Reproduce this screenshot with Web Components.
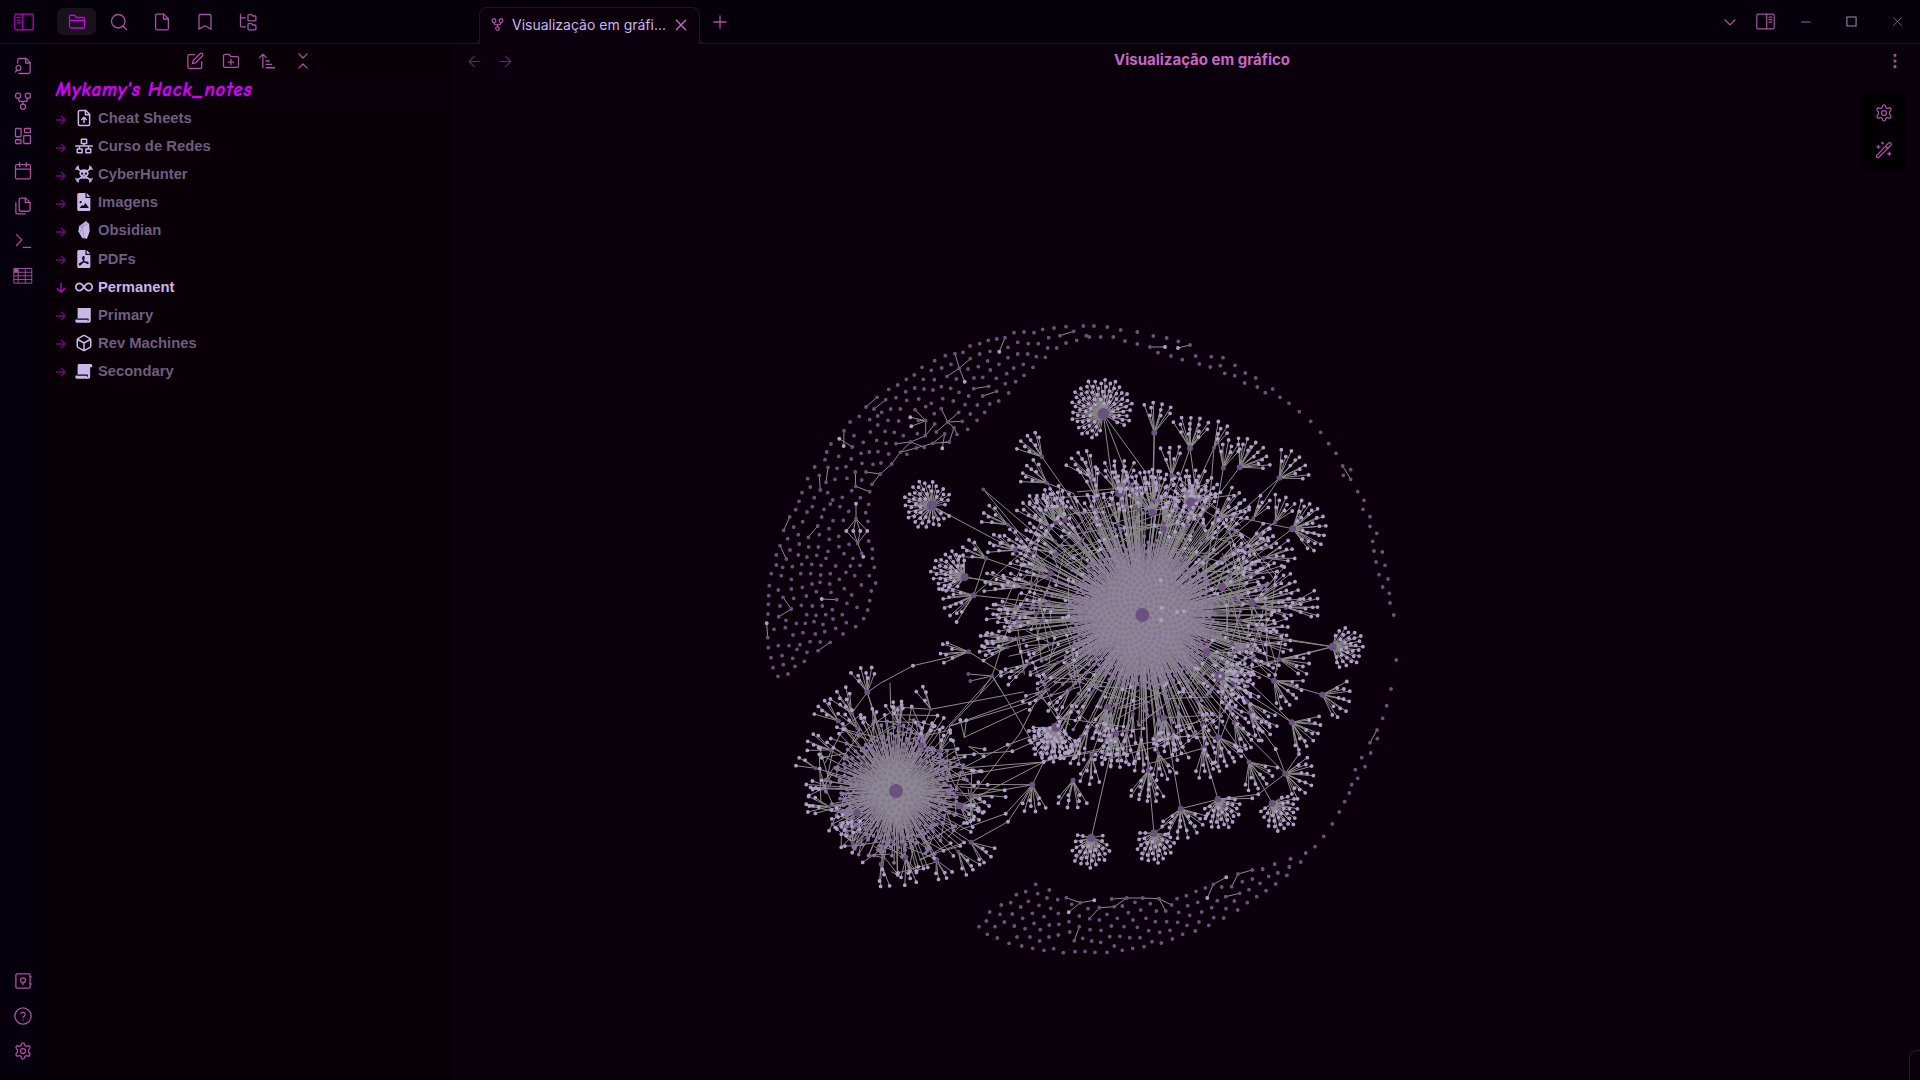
<!DOCTYPE html>
<html lang="pt-BR">
<head>
<meta charset="utf-8">
<title>Visualização em gráfico</title>
<style>
html,body{margin:0;height:100%;background:#0a000c;overflow:hidden}
body{font-family:Inter,"Liberation Sans",sans-serif;font-size:15px}
</style>
</head>
<body>
<vault-app></vault-app>
<script>
const ICONS = {
  panelLeft:'<rect x="1" y="2.6" width="22" height="18.8" rx="2"/><path d="M10.5 3v18M4 6.5h3.5M4 9.7h3.5M4 12.9h3.5"/>',
  panelRight:'<rect x="1" y="2.6" width="22" height="18.8" rx="2"/><path d="M13.5 3v18M16.5 6.5H20M16.5 9.7H20M16.5 12.9H20"/>',
  folder:'<path d="M4 20h16a2 2 0 0 0 2-2V8a2 2 0 0 0-2-2h-7.9a2 2 0 0 1-1.7-.9l-.8-1.2A2 2 0 0 0 7.9 3H4a2 2 0 0 0-2 2v13a2 2 0 0 0 2 2ZM2 10h20"/>',
  search:'<circle cx="11" cy="11" r="9"/><path d="m22 22-4.6-4.6"/>',
  file:'<path d="M14.5 1.5H5.5a2 2 0 0 0-2 2v17a2 2 0 0 0 2 2h13a2 2 0 0 0 2-2v-13Z"/><path d="M14 1.5v6.500h6.500"/>',
  bookmark:'<path d="m20 21.500-8-4.500-8 4.500V4a2 2 0 0 1 2-2h12a2 2 0 0 1 2 2Z"/>',
  tree:'<path d="M21.500 10.500a1 1 0 0 0 1-1V5a1 1 0 0 0-1-1H18.500l-1.600-1.800H13a1 1 0 0 0-1 1v6.300a1 1 0 0 0 1 1ZM21.500 22.500a1 1 0 0 0 1-1V17a1 1 0 0 0-1-1H18.500l-1.600-1.800H13a1 1 0 0 0-1 1v6.300a1 1 0 0 0 1 1ZM2 2v14.500a2 2 0 0 0 2 2h4.500M2 6.500h6.500"/>',
  fileSearch:'<path d="M5 8V4a2 2 0 0 1 2-2h9l5.500 5.500V20a2 2 0 0 1-2 2H6.500"/><path d="M15.500 2v6h6M4 17.500l-2 2.500"/><circle cx="6" cy="14.500" r="3.300"/>',
  graph:'<circle cx="5.500" cy="5" r="3.500"/><circle cx="18.500" cy="5" r="3.500"/><circle cx="12" cy="19.500" r="3.300"/><path d="M6 8.500c0 3 1.500 4 3 4h6c1.500 0 3-1 3-4M12 12.500v3.500"/>',
  layout:'<rect x="2" y="2" width="7.500" height="11" rx="1"/><rect x="14" y="2" width="8" height="5.500" rx="1"/><rect x="13" y="11.500" width="9" height="10.500" rx="1"/><rect x="2" y="17" width="7.500" height="5" rx="1"/>',
  calendar:'<rect x="2" y="3.500" width="20" height="19" rx="2"/><path d="M7.500 1v5M16.500 1v5M2 9.500h20"/>',
  copy:'<path d="M15.500 1.500H9a2 2 0 0 0-2 2V17a2 2 0 0 0 2 2h10.500a2 2 0 0 0 2-2V7.500Z"/><path d="M15 1.500v6h6.500M2.500 7.500v13a2 2 0 0 0 2 2h10.500"/>',
  terminal:'<path d="m3.500 18 7-7.500-7-7M12.500 20.500H22"/>',
  table:'<path stroke-width="1.200" d="M.3 2h23.400v19.500H.3ZM5.500 2v19.500M15 2v19.500M.3 7h23.400M.3 11.800h23.400M.3 16.700h23.400"/><path fill="currentColor" stroke="none" d="M.3 2h5.200V7H.3Z"/>',
  vault:'<rect x="2.500" y="2.500" width="19" height="19" rx="1.500"/><circle cx="12" cy="11" r="3.300"/><path d="M12 14.300V17M21.500 6.500H23M21.500 16H23"/>',
  help:'<circle cx="12" cy="12" r="10.800"/><path d="M9 9a3.100 3.100 0 0 1 6 1c0 2-3 2.500-3 4.300M12 17.300v.2"/>',
  gear:'<path d="M10 3.200a2 2 0 0 1 4 0c.2 2.300 2.400 3 4.200 2.200 2.400-1.300 4.300 2 2.400 3.500-1.900 1.300-1.900 4.800 0 6.200 1.900 1.500 0 4.800-2.400 3.500-1.800-.8-4-.1-4.200 2.200a2 2 0 0 1-4 0c-.2-2.300-2.400-3-4.200-2.200-2.400 1.300-4.300-2-2.400-3.500 1.900-1.400 1.900-4.900 0-6.200-1.900-1.500 0-4.800 2.400-3.500 1.800.8 4 .1 4.200-2.200Z"/><circle cx="12" cy="12" r="3.300"/>',
  edit:'<path d="M11.500 3.500H4.500a2 2 0 0 0-2 2v14.500a2 2 0 0 0 2 2H19a2 2 0 0 0 2-2v-7"/><path d="M18.800 2.300a2.100 2.100 0 0 1 3 3L12.500 14.600l-4 1 1-4Z"/>',
  folderPlus:'<path d="M4 20.500h16a2 2 0 0 0 2-2V8.300a2 2 0 0 0-2-2h-8L9.500 3.200H4a2 2 0 0 0-2 2v13.300a2 2 0 0 0 2 2ZM12 10v7M8.500 13.500h7"/>',
  sort:'<path d="m2 7.500 4.500-4.500L11 7.500M6.500 3v18M11 12h4M11 16.500h7M11 21h11"/>',
  collapse:'<path d="m6.500 21.500 5.500-5.500 5.500 5.500M6.500 2.500 12 8l5.500-5.500"/>',
  close:'<path d="m4 4 16 16M20 4 4 20"/>',
  cross:'<path d="m1.500 1.500 21 21M22.500 1.500l-21 21"/>',
  plus:'<path d="M12 1.500v21M1.500 12h21"/>',
  down:'<path d="m3.500 8.500 8.500 8.500 8.500-8.500"/>',
  back:'<path d="M22 12H2M12 2 2 12l10 10"/>',
  fwd:'<path d="M2 12h20M12 2l10 10-10 10"/>',
  minus:'<path d="M2 12h20" stroke-width="3.500"/>',
  square:'<rect x="2" y="2" width="20" height="20"/>',
  dots:'<g fill="currentColor"><circle cx="12" cy="3.500" r="1.500"/><circle cx="12" cy="12" r="1.500"/><circle cx="12" cy="20.500" r="1.500"/></g>',
  wand:'<path d="m2.300 19.200 16-16.500c1.800-1.500 4.500 1.200 3 3L5 21.700c-1.800 1.500-4.300-.9-2.700-2.500ZM14 7l3 3M4.500 5.800v4M2.500 7.800h4M10 1.500v2.500M8.800 2.700h2.500M19 15v4M17 17h4"/>',
  arrow:'<path d="M1 12h21M13 3l9 9-9 9"/>',
  arrowDown:'<path d="M12 1v21M3 13l9 9 9-9"/>',
  sheet:'<path d="M14.500 2H6.500a2 2 0 0 0-2 2v16a2 2 0 0 0 2 2h11a2 2 0 0 0 2-2V7Z"/><path d="M14 2v5.500h5.500M12 18v-6M9 14l3-3 3 3"/>',
  net:'<path d="M8.500 3h7v5.500h-7ZM3 16h6.500v5H3ZM14.500 16H21v5h-6.500ZM1 12h22M12 8.500V12M6 12v4M18 12v4"/>',
  skull:'<g fill="currentColor" stroke="none"><path d="M12 5.500c4 0 6.200 2.500 6.200 5.500 0 2-1 3.200-2.400 4v3.500H8.200V15c-1.400-.8-2.400-2-2.400-4 0-3 2.200-5.500 6.200-5.500Z"/></g><path d="m2.500 3.500 5 4.500M21.500 3.500l-5 4.500M2.500 21l5.500-4.500M21.500 21 16 16.500M1 5.500 4.500 5 4 1.500M23 5.500 19.500 5l.5-3.500M1 18.500l3.500.5L4 22.500M23 18.500l-3.500.5.500 3.500"/><g fill="#0a0006" stroke="none"><circle cx="9.500" cy="11.500" r="1.500"/><circle cx="14.500" cy="11.500" r="1.500"/><path d="m12 13-1 2h2ZM10 17h1v2h-1ZM13 17h1v2h-1Z"/></g>',
  image:'<path fill="currentColor" stroke="none" d="M5 0h9v6.500h6.500V22a2 2 0 0 1-2 2H5a2 2 0 0 1-2-2V2a2 2 0 0 1 2-2ZM15.500 0l5 5h-5Z"/><g fill="#0a0006" stroke="none"><circle cx="7.500" cy="12" r="1.500"/><path d="m6 20 3.500-4 1.500 1.300 3-4 4.500 6.700Z"/></g>',
  stone:'<path fill="currentColor" stroke="none" d="M14.500 0 19 4l.5 10-3.500 9.500-6.500-1L4.500 14 5.500 7Z"/><path stroke="#8f80a4" stroke-width=".8" d="M14.500 0 10 7l2 16M5.500 7 10 7l-3.500 9M10 7l8-3.500"/>',
  pdf:'<path fill="currentColor" stroke="none" d="M5 0h9v6.500h6.500V22a2 2 0 0 1-2 2H5a2 2 0 0 1-2-2V2a2 2 0 0 1 2-2ZM15.500 0l5 5h-5Z"/><path stroke="#0a0006" stroke-width="1.500" d="M11 9c2-1 1 4 0 6s-4 6-5 4.500 4-3.500 6-3.500 6 0 5.500 1.500-6-2-7-5S10 9.500 11 9Z"/>',
  infinity:'<path stroke-width="2.300" d="M12 12c-2-3-3.500-4.900-6-4.900a4.900 4.900 0 0 0 0 9.800c2.500 0 4-1.900 6-4.900s3.500-4.900 6-4.900a4.900 4.900 0 0 1 0 9.800c-2.500 0-4-1.900-6-4.900Z"/>',
  scroll:'<path fill="currentColor" stroke="none" d="M3.500 2.500H21V20a2.300 2.300 0 0 1-2 2.300H3.500A2.500 2.500 0 0 1 1.200 18h2.300Z"/><path stroke="#0a0006" stroke-width="1.400" d="M4 17.500h13.500V19"/>',
  scroll2:'<path fill="currentColor" stroke="none" d="M5 2.500h16a2 2 0 0 1 2 2V7h-2.800v13a2.300 2.300 0 0 1-2 2.300H3.500A2.500 2.500 0 0 1 1.200 18h2.300V4.500A2 2 0 0 1 5 2.500Z"/><path stroke="#0a0006" stroke-width="1.400" d="M4 17.500h12.500V19"/>',
  box:'<path d="M21 16V8a2 2 0 0 0-1-1.730l-7-4a2 2 0 0 0-2 0l-7 4A2 2 0 0 0 3 8v8a2 2 0 0 0 1 1.730l7 4a2 2 0 0 0 2 0l7-4A2 2 0 0 0 21 16ZM3.300 7l8.700 5 8.700-5M12 22V12"/>'
};
function define(name, markup, setup){
  const t=document.createElement('template');
  customElements.define(name, class extends HTMLElement{
    connectedCallback(){
      if(this.shadowRoot) return;
      const root=this.attachShadow({mode:'open'});
      t.innerHTML=typeof markup==='function'?markup(this):markup;
      root.append(t.content.cloneNode(true));
      if(setup) setup(root,this);
    }
  });
}
define('ui-icon', el=>{
  const s=el.getAttribute('size')||18, w=el.getAttribute('weight')||1.7;
  return `<style>:host{display:block;flex:none;width:${s}px;height:${s}px}svg{display:block;width:100%;height:100%;overflow:visible}</style>
  <svg viewBox="0 0 24 24" fill="none" stroke="currentColor" stroke-width="${w}" stroke-linecap="round" stroke-linejoin="round">${ICONS[el.getAttribute('name')]}</svg>`;
});
define('side-ribbon', `<style>
:host{display:flex;flex-direction:column;justify-content:space-between;align-items:center;box-sizing:border-box;width:47px;background:#06000d;color:#a952a6;padding:13px .4px 20.4px 0}
div{display:flex;flex-direction:column;gap:17px}
</style>
<div>${['fileSearch','graph','layout','calendar','copy','terminal','table'].map(n=>`<ui-icon name="${n}"></ui-icon>`).join('')}</div>
<div>${['vault','help','gear'].map(n=>`<ui-icon name="${n}"></ui-icon>`).join('')}</div>`);
define('folder-row', el=>`<style>
:host{display:flex;align-items:center;height:28.1px;color:#6f5d80;font:bold 14.8px/20px "Liberation Sans",sans-serif}
:host([open]){color:#cbb6ea}
.a{margin-right:9px;color:#730085;padding-top:3px}
:host([open]) .a{color:#b800d6}
.i{margin-right:5px;color:#cbb6ea}
</style><ui-icon class="a" size="10" weight="3.200" name="${el.hasAttribute('open')?'arrowDown':'arrow'}"></ui-icon>
<ui-icon class="i" size="18" weight="2" name="${el.getAttribute('icon')}"></ui-icon><slot></slot>`);
define('file-sidebar', `<style>
:host{display:flex;flex-direction:column;width:401px;background:#090007;border:solid #000;border-width:0 2px 0 1px;box-sizing:content-box}
.tools{display:flex;justify-content:center;gap:18px;color:#a952a6;height:34px;align-items:center;box-sizing:border-box}
.name{height:26px;background:#08000a;display:flex;align-items:center;padding-left:8px;color:#d400f5;font:italic 700 19px/26px "Z003","URW Chancery L","Comic Neue",Lato,cursive;white-space:pre}
.name span{letter-spacing:.76px;position:relative;top:-1px;-webkit-text-stroke:.4px #d400f5}
.list{padding-left:8px}
</style>
<div class="tools"><ui-icon name="edit"></ui-icon><ui-icon name="folderPlus"></ui-icon><ui-icon name="sort"></ui-icon><ui-icon name="collapse"></ui-icon></div>
<div class="name"><span>Mykamy's Hack_notes</span></div>
<div class="list">
<folder-row icon="sheet">Cheat Sheets</folder-row><folder-row icon="net">Curso de Redes</folder-row><folder-row icon="skull">CyberHunter</folder-row><folder-row icon="image">Imagens</folder-row><folder-row icon="stone">Obsidian</folder-row><folder-row icon="pdf">PDFs</folder-row><folder-row icon="infinity" open>Permanent</folder-row><folder-row icon="scroll">Primary</folder-row><folder-row icon="box">Rev Machines</folder-row><folder-row icon="scroll2">Secondary</folder-row>
</div>`);
define('top-bar', `<style>
:host{display:flex;height:44px;box-sizing:border-box;background:#06000a;border-bottom:1px solid #1b171b;color:#a952a6}
.left{width:450px;box-sizing:border-box;border-right:1px solid #000;display:flex;align-items:center;padding:0 0 0 14px}
.sel{width:39px;height:27px;border-radius:6px;background:#19111b;color:#c900e8;display:flex;align-items:center;justify-content:center;margin-left:23px;margin-right:14px}
.left ui-icon + ui-icon{margin-left:24.9px}
.tabs{display:flex;flex:1;padding-left:29px;align-items:flex-end}
.tab{box-sizing:border-box;width:221px;height:37px;margin-bottom:-1px;border:1px solid #1b171b;border-bottom:0;border-radius:8px 8px 0 0;background:#0a000c;display:flex;align-items:center;padding:0 11px 3px 11px;color:#cbb6ea;position:relative}
.tab:before,.tab:after{content:"";position:absolute;bottom:0;width:6px;height:6px;border-bottom:1px solid #1b171b;background:#06000a}
.tab:before{left:-7px;border-right:1px solid #1b171b;border-bottom-right-radius:6px}
.tab:after{right:-7px;border-left:1px solid #1b171b;border-bottom-left-radius:6px}
.tab span{flex:1;margin-left:8px;font-size:14px;white-space:nowrap}
.tab ui-icon{color:#b355b0}.tab .x{color:#c867c2}
.plus{margin:0 0 14px 13px}
.win{display:flex;align-items:center;padding-right:18px}
</style>
<div class="left"><ui-icon style="color:#b400cf" size="20" weight="1.500" name="panelLeft"></ui-icon><div class="sel"><ui-icon name="folder"></ui-icon></div><ui-icon name="search"></ui-icon><ui-icon name="file"></ui-icon><ui-icon name="bookmark"></ui-icon><ui-icon name="tree"></ui-icon></div>
<div class="tabs"><div class="tab"><ui-icon name="graph" size="13" weight="2.200"></ui-icon><span>Visualização em gráfi...</span><ui-icon class="x" name="close" size="14" weight="2.400"></ui-icon></div><ui-icon class="plus" name="plus" size="14" weight="2.200"></ui-icon></div>
<div class="win"><ui-icon name="down" size="14" weight="2.200"></ui-icon><ui-icon name="panelRight" size="19" weight="1.500" style="margin-left:19px"></ui-icon><ui-icon name="minus" size="10" style="margin-left:25.500px;color:#5d4b6b"></ui-icon><ui-icon name="square" size="11" weight="2.300" style="margin-left:35.500px;color:#9c88b4"></ui-icon><ui-icon name="cross" size="9" weight="2.500" style="margin-left:36px;color:#6f5f7c"></ui-icon></div>`);
define('graph-controls', `<style>:host{display:flex;flex-direction:column;align-items:center;gap:19px;width:46px;height:79px;box-sizing:border-box;padding-top:12px;padding-right:1px;border-radius:8px;background:#030004;color:#a952a6}</style><ui-icon name="gear"></ui-icon><ui-icon name="wand"></ui-icon>`);

/* Unlinked notes: coordinates are in thirds of a pixel from each group's origin. */
const LOOSE = [
[750,310,`1000,48 948,50 912,54 878,58 852,68 822,66 792,68 971,64 930,77 1009,77 896,83 980,91 948,99 920,114 893,114 865,101 835,101 803,97 765,83 740,87 715,91 689,101 660,108 639,127 615,131 586,137 554,152 516,172 774,112 720,124 689,132 661,146 803,132 833,132 859,140 886,142 774,143 820,163 849,172 747,163 713,153 685,170 654,177 628,175 603,163 575,174 544,181 493,195 469,208 443,225 416,238 520,208 553,209 591,199 619,207 672,204 698,202 721,180 739,205 770,191 791,174 822,196 797,215 766,221 776,249 740,244 716,229 671,236 698,258 746,273 719,282 704,307 682,285 656,258 627,247 602,235 574,230 610,273 645,284 661,312 681,331 653,358 637,334 626,307 593,336 612,353 621,373 574,296 578,266 544,280 549,240 522,237 494,234 467,245 506,267 470,271 438,263 407,269 381,262 348,291 372,297 395,307 422,297 451,297 495,299 527,290 553,311 554,342 527,332 505,331 446,333 414,331 383,318 359,329 328,319 300,336 282,362 307,411 312,377 340,397 361,366 383,345 405,364 433,367 460,377 502,371 526,377 559,366 584,371 598,396 548,400 523,412 499,414 482,396 438,401 408,400 380,391 358,426 384,425 416,432 451,427 471,433 425,462 393,459 369,463 336,460 333,430 304,447 266,439 243,402 230,426 225,449 194,471 234,472 261,475 288,470 316,486 348,486 391,492 366,523 359,545 317,529 335,510 291,505 255,508 228,517 208,496 173,506 181,531 211,540 156,548 147,574 193,563 233,548 248,570 277,562 305,542 331,563 356,583 347,608 318,626 296,604 270,590 241,582 222,598 187,590 171,606 137,599 119,621 101,661 131,651 158,635 215,621 249,632 280,631 203,648 237,656 175,682 145,674 113,686 90,707 120,720 148,702 176,711 205,711 208,674 238,688 266,679 297,703 267,710 234,724 282,731 309,745 354,634 323,700 356,693 367,717 367,745 335,730 330,766 301,768 257,768 228,745 200,736 171,741 145,735 109,747 79,735 79,765 64,791 98,772 127,770 155,763 185,763 213,766 241,791 212,795 182,791 152,791 124,808 94,797 58,827 85,840 56,857 99,862 124,837 157,832 186,822 210,817 239,822 268,808 288,787 314,797 283,836 334,825 358,797 373,772 377,819 364,843 359,872 353,900 341,926 317,950 321,892 291,880 305,855 260,869 243,847 199,845 169,858 131,865 90,888 55,883 54,912 53,983 72,958 86,920 124,897 154,886 187,888 217,888 247,899 227,914 198,916 170,914 139,940 108,931 106,953 129,975 159,968 166,940 192,935 219,943 249,927 277,914 289,938 279,972 257,955 224,965 196,972 241,997 211,996 204,1022 180,995 150,1004 117,1007 85,1007 55,1013 63,1043 96,1037 128,1045 100,1064 69,1073 84,1099 114,1092 135,1069 163,1054 171,1027 141,1018 700,538 726,1098 655,1092 661,1113`],
[1050,350,`324,8 363,18 397,29 437,18 484,20 519,23 448,42 481,51 511,47 555,46 524,70 554,77 586,69 617,84 584,99 622,111 646,128 668,117 690,142 717,160 748,185 782,214 812,247 836,281 858,310 878,348 902,359 880,376 902,388 923,425 942,451 939,478 960,500 960,529 980,550 968,574 972,603 997,606 978,636 1005,646 987,674 1014,687 998,711 1018,730 1020,759 1031,795 132,-72 172,-69 212,-60 262,-54 310,-42 350,-36 300,-9 225,-27 190,-39 152,-39 118,-39 262,-18 385,-26 420,-15`],
[1050,600,`1039,180 1023,267 1010,317 998,355 981,390 982,416 960,428 962,459 935,473 945,500 916,509 923,535 905,554 898,579 884,605 868,636 847,672 821,709 795,740 767,759 752,786 722,776 718,800 711,826 684,819 674,793 656,829 638,807 607,810 564,822`],
[970,830,`197,163 167,185 139,194 203,191 238,180 231,204 263,209 175,214 122,218 94,225 59,246 152,231 207,226 242,235 265,250 305,223 187,250 222,260 127,252 90,253 158,265 192,280 238,285 267,283 297,275 328,258 354,236 49,273 27,290 52,313 82,324 75,290 103,276 133,288 165,296 211,299 141,321 180,321 117,340 155,348 188,355 209,333 237,321 265,315 299,306 222,361 251,356 280,368 315,365 345,364 375,367 411,367 433,348 457,361 488,355 522,350 546,335 574,339 607,327 338,325 365,333 392,337 419,320 450,319 479,323 510,323 360,299 393,301 424,288 462,290 502,292 536,302 569,307 600,301 638,313 676,303 651,286 623,277 590,275 556,275 528,265 489,270 442,265 411,253 388,270 475,248 512,240 559,243 541,221 495,217 457,228 626,247 659,256 653,227 621,206 649,197 678,184 706,174 683,217 695,246 687,276 716,286 731,263 761,264 768,236 725,233 742,212 793,213 803,240 832,218 860,200 888,182 917,162 950,136 992,96 1007,69 961,87 958,111 914,102 923,128 896,139 870,160 837,179 847,147 817,155 878,118 755,171 289,203 331,218 425,207 470,204 518,204 567,206 605,225 587,243 433,230 388,233 359,266 328,290 313,332 730,163 785,170 804,132 847,120 767,200 809,190`]];
const BRIGHT = [
[750,310,`748,125 644,215 481,322 484,349 268,386 281,408 577,415 318,581 289,663 310,663 331,663 352,663 340,740 215,867 50,940 489,1067 753,1086`],
[1050,350,`345,-9 384,-6 332,691 335,774 381,786 402,784 333,810 486,717 433,506 399,482 451,495 376,545`],
[970,830,`373,211 296,247 712,204 769,142`],
[780,640,`683,314 697,334 623,434 674,451 677,471 677,521 684,545 595,427 605,394 582,343 614,328 611,349 791,366 541,240 559,241 519,302`],
[1050,600,`625,583 607,595 747,462 677,447 489,226`]];
const LINKS = [
[750,310,`765,83 748,125|971,64 930,77|615,131 628,175 644,215|661,146 628,175 591,199|671,236 716,229|698,258 740,244|381,262 348,291|407,269 372,297|282,362 281,408|268,386 307,411|495,299 527,332 527,377 482,396 451,427 425,462 391,492 366,523|481,322 527,332 484,349|505,331 527,332|527,377 554,342|574,296 593,336 626,307|637,334 593,336 559,366|593,336 612,353 621,373|612,353 598,396 548,400 499,414 451,427|438,401 482,396 523,412|548,400 584,371 577,415|598,396 575,398|348,486 391,492|316,486 317,529 359,545|234,472 228,517|208,496 211,540|119,621 101,661|203,648 175,682|90,707 109,747|318,581 318,626 289,663 323,700 310,663 318,626 331,663 323,700 352,663 318,626|323,700 340,740|215,867 260,869|99,862 124,897 86,920|50,940 53,983|241,997 204,1022|655,1092 726,1098 661,1113|545,587 796,721 1160,900|644,801 1170,895|644,801 820,831 1175,910|671,856 708,745 1100,880|671,856 900,652|671,856 1170,910|656,1025 753,1086 820,1086|656,1025 585,1045 489,1067 400,1115|700,538 900,780|700,538 960,760|876,441 960,560 1100,850|891,519 970,550 1160,860|808,850 726,1098 690,1150|726,1098 752,1140`],
[1050,350,`878,348 902,388|306,-9 345,-9|384,-6 420,-15|160,192 190,420|160,192 240,400|160,192 284,363|313,248 306,470|313,248 309,480|420,295 340,520|420,295 440,440|492,293 420,450|492,293 478,470|520,354 470,650|569,352 510,430|688,384 610,505|688,384 535,520|728,536 503,490|728,536 520,690|676,516 520,640`],
[1050,600,`981,390 960,428|848,140 300,50|848,140 560,100|848,140 510,228|848,140 640,190|817,284 672,242|725,367 510,228|725,367 580,230|672,242 700,100|706,521 677,447 598,338|706,521 747,462 725,367|706,521 553,368|706,521 625,583 504,598|504,598 607,595|504,598 459,445|504,598 392,626|392,626 340,330|312,700 295,511 280,80|312,700 392,640|124,714 175,490 270,100|667,610 597,486 350,130|505,412 315,408|505,412 515,250|459,445 300,490|600,20 655,190|-20,482 459,400|0,480 205,435`],
[970,830,`289,203 331,218 373,211|331,218 296,247|425,207 470,204 518,204 567,206 605,225|567,206 587,243|470,204 433,230 388,233 359,266|328,290 313,332|712,204 730,163 769,142|785,170 804,132 847,120|767,200 809,190`],
[780,640,`332,200 452,208 730,156|510,258 662,97|490,275 640,107|637,107 742,280 791,366|510,258 737,176|553,292 740,205|548,384 683,314 750,290|532,346 697,334 820,280|480,334 510,258 900,140|548,384 791,366 900,330|535,408 791,366 757,434|573,467 757,434 535,433|540,497 791,366|573,467 720,280 760,200|540,570 677,521 757,434|573,607 684,545 757,434|540,440 674,451|530,458 677,471|567,320 614,328|567,320 611,349|548,384 605,394|553,292 541,240|553,292 559,241|532,346 519,302|532,346 582,343|330,130 332,200|262,157 310,124|262,157 300,270 348,453|262,157 215,220`]];
/* hub x, y, radius, fan length, heading, spread */
const FANS = [
[750,310,`545,587,5,29,195,335 644,801,4,35,-160,155 671,856,3,31,160,85 708,745,2.200,26,-150,65 796,721,2.500,27,-160,60 773,644,2,27,-150,60 656,1025,2.500,28,180,60 876,441,2.300,26,-130,75 891,519,2,27,-145,75 900,652,3,37,-135,45 918,638,2,34,-122,50 943,631,2,28,-110,45 820,831,2.500,39,-170,40 860,910,2.500,50,-178,25 835,945,2,30,180,35 780,987,2,29,180,40 772,1012,2,28,165,40 902,790,3,42,-150,40`],
[1050,350,`160,192,6,37,-113,300 313,248,3,30,-80,70 420,295,3,31,-85,85 492,293,2,26,-65,45 520,354,2.500,29,-75,65 569,352,3,30,-45,105 688,384,2.800,29,-42,100 131,388,2.500,30,-125,65 208,430,4,33,-95,85 306,488,4,41,-98,100 365,377,2.500,29,-90,55 425,460,6,34,-80,140 610,505,2,24,-55,50 676,516,2.200,27,-62,70 728,536,3.500,33,-10,135 642,624,2.300,30,-14,55 583,596,2.300,32,-35,45 503,507,3,34,-40,60 516,712,4,43,-35,60 607,758,3.500,47,-24,55 708,772,2.500,32,-5,60 342,537,3,32,-60,80 45,510,2.500,34,-120,60`],
[1050,600,`848,140,4,32,3,190 817,284,3,28,18,105 725,367,3,29,35,105 672,242,3,29,42,95 688,178,2.500,30,12,60 592,305,2.500,31,50,60 598,338,2,30,50,60 505,412,3,30,60,85 459,445,2.500,29,80,65 597,486,2.500,28,55,100 706,521,3,28,18,120 667,610,3.500,31,48,205 504,598,3.200,31,72,165 392,626,3,29,80,140 312,700,3.800,31,85,205 124,714,4.200,31,95,235 295,511,2.600,31,95,80 325,460,2,27,75,70 199,402,3,33,95,65 230,397,2,29,95,50 343,353,3,34,85,65 553,368,2.500,30,60,60 125,466,2.500,28,98,60 69,541,2.500,27,95,85 18,382,4.500,36,105,165 93,410,2,28,115,50 510,228,5,35,25,130 470,157,4,34,30,70 172,320,3,34,110,60 640,130,2,28,8,40`],
[780,640,`262,157,3,25,-100,75 215,220,2.200,26,-120,65 175,243,2.500,25,-140,60 152,330,2.200,24,-155,65 107,385,2,20,-155,50 452,208,1.500,23,-115,40 357,256,2.400,24,-100,60 232,265,2,24,-125,50 424,316,3,24,-80,60 480,334,2,22,-70,60 573,467,2.500,21,35,80 540,497,3.500,24,30,90 573,607,2.500,24,40,65 535,635,2,24,55,60 469,660,3,20,65,70 304,672,2.600,23,85,45 218,609,2.200,22,-100,90 148,500,2,23,190,60 231,518,3.500,26,160,80 757,434,3,27,88,70 826,262,4.500,30,120,130 378,652,2.500,27,85,50 145,438,2,22,175,60`]];
define('graph-view', `<style>:host{display:flex;flex:1;min-height:0}svg{width:1469px;height:1002px;display:block}path{fill:none;stroke-linecap:round}</style>
<svg viewBox="451 78 1469 1002"><path id="e" stroke="#8b8b8b" stroke-width="1"/><g id="n"></g></svg>`, root=>{
  let seed=7; const rnd=()=>(seed=(seed*16807)%2147483647)/2147483647;
  let edges=''; const layers={};
  const f=v=>v.toFixed(1);
  const line=(a,b,c,d)=>{edges+=`M${f(a)} ${f(b)}L${f(c)} ${f(d)}`};
  const dot=(x,y,r,c)=>{const k=c+'|'+r;layers[k]=(layers[k]||'')+`M${f(x)} ${f(y)}h.01`};
  const DARK='#6c5080',LIGHT='#b29ecb',MID='#8a71a1';
  /* Large hubs carry a round cloud of leaves, pushed away from the hub along its heading. */
  function cloud(x,y,r,R,dir,spread){
    const a0=dir*Math.PI/180,s=spread*Math.PI/180,o=R*(spread>280?.15:.36),rad=R-o;
    const mx=x+Math.cos(a0)*o,my=y+Math.sin(a0)*o,n=Math.round(Math.PI*rad*rad/32);
    for(let i=0;i<n;i++){
      const k=rad*Math.sqrt((i+.5)/n),a=i*2.39996+a0,lx=mx+Math.cos(a)*k,ly=my+Math.sin(a)*k;
      const dx=lx-x,dy=ly-y,off=Math.atan2(Math.sin(Math.atan2(dy,dx)-a0),Math.cos(Math.atan2(dy,dx)-a0));
      if(Math.abs(off)>s/2||Math.hypot(dx,dy)<r+4) continue;
      line(x,y,lx,ly);dot(lx,ly,1.900,LIGHT);
    }
    dot(x,y,r,DARK);
  }
  function fan(x,y,r,R,dir,spread){
    if(spread>=150) return cloud(x,y,r,R,dir,spread);
    const a0=dir*Math.PI/180,s=spread*Math.PI/180,wide=spread>120;
    for(let q=0,rr=R;q<(wide?5:4)&&rr>R*(wide?.25:.42);q++,rr-=5.800){
      const n=Math.max(1,Math.round(s*rr*.84/8.000));
      for(let i=0;i<n;i++){
        const d=((i+.5+(q%2?.25:-.2))/n-.5)*s, k=(wide?.8+.2*Math.cos(d):1)*rr+rnd()*2-1;
        const lx=x+Math.cos(a0+d)*k,ly=y+Math.sin(a0+d)*k;
        line(x,y,lx,ly);dot(lx,ly,1.900,LIGHT);
      }
    }
    dot(x,y,r,DARK);
  }
  const cx=1142.3,cy=615;
  for(let i=6;i<620;i++){const r=2.950*Math.sqrt(i),a=i*2.39996,x=cx+Math.cos(a)*r,y=cy+Math.sin(a)*r;line(cx,cy,x,y);dot(x,y,1.900,MID)}
  for(let i=0;i<420;i++){const a=rnd()*6.283,r=72+rnd()*62,x=cx+Math.cos(a)*r,y=cy+Math.sin(a)*r;
    line(cx,cy,x,y);dot(x,y,1.800,rnd()<.35?LIGHT:MID);
    if(i%2===0){const b=a+(rnd()-.5)*1.100,q=r+(rnd()-.5)*50;line(x,y,cx+Math.cos(b)*q,cy+Math.sin(b)*q)}}
  for(let i=0;i<54;i++){const a=i/54*6.283+rnd()*.08,r=(i%2?113:92)+rnd()*14,x=cx+Math.cos(a)*r,y=cy+Math.sin(a)*r;
    line(cx,cy,x,y);fan(x,y,2,27+rnd()*7,a*57.296+(rnd()-.5)*16,44)}
  const hx=896,hy=791;
  for(let i=6;i<300;i++){const r=3.350*Math.sqrt(i),a=i*2.39996,x=hx+Math.cos(a)*r,y=hy+Math.sin(a)*r;line(hx,hy,x,y);dot(x,y,1.850,MID)}
  for(let i=0;i<190;i++){const a=i/190*6.283+rnd()*.1,r=50+rnd()*38,x=hx+Math.cos(a)*r,y=hy+Math.sin(a)*r;
    if(i%3)line(hx,hy,x,y);
    if(i%3!==1){const b=a+(rnd()-.5)*1.2,q=r*(.6+rnd()*.4);line(x,y,hx+Math.cos(b)*q,hy+Math.sin(b)*q)}
    dot(x,y,1.900,r>74?LIGHT:MID)}
  for(const [ox,oy,s] of FANS) for(const t of s.split(' ')){const [x,y,r,R,d,w]=t.split(',').map(Number),X=ox+x/3,Y=oy+y/3;
    fan(X,Y,r,R,d,w);
    const small=ox===780&&x<600, tx=small?hx:cx,ty=small?hy:cy,dist=Math.hypot(X-tx,Y-ty);
    if(small||dist<165) line(X,Y,tx,ty);}
  for(const [ox,oy,s] of LINKS) for(const p of s.split('|')){const q=p.split(' ').map(t=>t.split(',').map(Number));
    for(let i=1;i<q.length;i++) line(ox+q[i-1][0]/3,oy+q[i-1][1]/3,ox+q[i][0]/3,oy+q[i][1]/3)}
  for(const [ox,oy,s] of LOOSE) for(const t of s.split(' ')){const [x,y]=t.split(',').map(Number);dot(ox+x/3,oy+y/3,1.900,DARK)}
  for(const [ox,oy,s] of BRIGHT) for(const t of s.split(' ')){const [x,y]=t.split(',').map(Number);dot(ox+x/3,oy+y/3,1.950,LIGHT)}
  dot(cx,cy,7,DARK);dot(hx,hy,7,DARK);
  root.getElementById('e').setAttribute('d',edges);
  const rank=k=>k.startsWith(MID)?0:k.startsWith(DARK)?1:2;
  root.getElementById('n').innerHTML=Object.keys(layers).sort((a,b)=>rank(a)-rank(b)).map(k=>{const [c,r]=k.split('|');return `<path stroke="${c}" stroke-width="${r*2}" d="${layers[k]}"/>`}).join('');
});
define('graph-pane', `<style>
:host{display:flex;flex-direction:column;flex:1;min-width:0;background:#0a000c;position:relative}
header{display:flex;align-items:center;height:34px;padding:0 17px 0 17px}
.nav{display:flex;gap:18px;color:#582a5d;width:93px}
h1{flex:1;margin:0;text-align:center;font:700 15px/20px Inter,sans-serif;color:#c566c2;padding:0 0 2px 0}
.r{width:60px;display:flex;justify-content:flex-end;color:#a952a6}
graph-controls{position:absolute;right:13px;top:48px}
.status{position:absolute;right:0;bottom:0;width:10px;height:29px;border:1px solid #211c22;border-right:0;border-bottom:0;border-top-left-radius:8px}
</style>
<header><div class="nav"><ui-icon name="back" size="13" weight="2.200"></ui-icon><ui-icon name="fwd" size="13" weight="2.200"></ui-icon></div><h1>Visualização em gráfico</h1><div class="r"><ui-icon name="dots" size="16"></ui-icon></div></header>
<graph-view></graph-view><graph-controls></graph-controls><div class="status"></div>`);
define('vault-app', `<style>:host{display:flex;flex-direction:column;width:1920px;height:1080px}main{display:flex;flex:1;min-height:0}</style>
<top-bar></top-bar><main><side-ribbon></side-ribbon><file-sidebar></file-sidebar><graph-pane></graph-pane></main>`);
</script>
</body>
</html>
